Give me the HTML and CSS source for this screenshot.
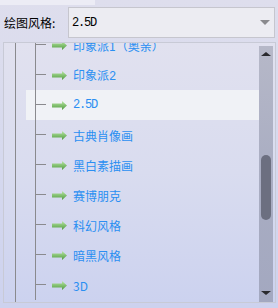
FILE: index.html
```html
<!DOCTYPE html>
<html lang="zh">
<head>
    <meta charset="UTF-8">
    <meta name="viewport" content="width=device-width, initial-scale=1.0">
    <title>绘图风格</title>
    <link rel="stylesheet" href="styles.css">
</head>
<body>
    <div class="topbar">
        <span class="label">绘图风格:</span>
        <div class="combo">
            <span class="combo-text">2.5D</span>
            <span class="combo-arrow"></span>
        </div>
    </div>

    <div class="list">
        <div class="tree">
            <div class="row"><span class="branch"></span><svg class="arrow" viewBox="0 0 15 9"><defs><linearGradient id="g1" x1="0" y1="0" x2="0" y2="1"><stop offset="0" stop-color="#b8e6a4"/><stop offset="1" stop-color="#4d9a3c"/></linearGradient></defs><path d="M0 2.5H10V0L15 4.5L10 9V6.5H0Z" fill="url(#g1)"/></svg><span class="name">印象派1（奥亲）</span></div>
            <div class="row"><span class="branch"></span><svg class="arrow" viewBox="0 0 15 9"><path d="M0 2.5H10V0L15 4.5L10 9V6.5H0Z" fill="url(#g1)"/></svg><span class="name">印象派<span class="mono">2</span></span></div>
            <div class="row selected"><span class="branch"></span><svg class="arrow" viewBox="0 0 15 9"><path d="M0 2.5H10V0L15 4.5L10 9V6.5H0Z" fill="url(#g1)"/></svg><span class="name mono">2.5D</span></div>
            <div class="row"><span class="branch"></span><svg class="arrow" viewBox="0 0 15 9"><path d="M0 2.5H10V0L15 4.5L10 9V6.5H0Z" fill="url(#g1)"/></svg><span class="name">古典肖像画</span></div>
            <div class="row"><span class="branch"></span><svg class="arrow" viewBox="0 0 15 9"><path d="M0 2.5H10V0L15 4.5L10 9V6.5H0Z" fill="url(#g1)"/></svg><span class="name">黑白素描画</span></div>
            <div class="row"><span class="branch"></span><svg class="arrow" viewBox="0 0 15 9"><path d="M0 2.5H10V0L15 4.5L10 9V6.5H0Z" fill="url(#g1)"/></svg><span class="name">赛博朋克</span></div>
            <div class="row"><span class="branch"></span><svg class="arrow" viewBox="0 0 15 9"><path d="M0 2.5H10V0L15 4.5L10 9V6.5H0Z" fill="url(#g1)"/></svg><span class="name">科幻风格</span></div>
            <div class="row"><span class="branch"></span><svg class="arrow" viewBox="0 0 15 9"><path d="M0 2.5H10V0L15 4.5L10 9V6.5H0Z" fill="url(#g1)"/></svg><span class="name">暗黑风格</span></div>
            <div class="row"><span class="branch"></span><svg class="arrow" viewBox="0 0 15 9"><path d="M0 2.5H10V0L15 4.5L10 9V6.5H0Z" fill="url(#g1)"/></svg><span class="name">3D</span></div>
        </div>
        <div class="scrollbar">
            <span class="sb-up"></span>
            <span class="sb-thumb"></span>
            <span class="sb-down"></span>
        </div>
    </div>
</body>
</html>
```

FILE: styles.css
```css
body {
    margin: 0;
    width: 278px;
    height: 308px;
    overflow: hidden;
    font-family: "Noto Sans CJK SC", "Noto Sans", sans-serif;
    font-size: 12px;
    background: linear-gradient(180deg, #dedeed 0%, #d6d9ee 50%, #cdd2ee 100%);
}
.topbar {
    display: flex;
    align-items: center;
    padding: 7px 3px 0 4px;
    height: 31px;
    background: linear-gradient(180deg, #ececf5 0, #ececf5 5px, transparent 5px) no-repeat;
    background-size: 95px 100%;
}
.label {
    width: 64px;
    color: #000;
    font-size: 12px;
}
.combo {
    flex: 1;
    height: 29px;
    border: 1px solid #c6c6ce;
    background-color: #ececf2;
    display: flex;
    align-items: center;
    padding-left: 3px;
}
.combo-text {
    flex: 1;
    font-family: "Liberation Mono", monospace;
    font-size: 12px;
    letter-spacing: -1.2px;
    color: #000;
}
.combo-arrow {
    width: 0;
    height: 0;
    border-left: 5px solid transparent;
    border-right: 5px solid transparent;
    border-top: 5px solid #8a8a8e;
    margin-right: 4px;
}
.list {
    margin: 4px 2px 0 3px;
    height: 259px;
    border: 1px solid #c8cad6;
    display: flex;
    overflow: hidden;
    background: linear-gradient(180deg, #e1e1ef 0%, #d9dcef 50%, #ccd2ef 100%);
}
.tree {
    flex: 1;
    margin-top: -13px;
    background-image: linear-gradient(90deg, transparent 11px, #8a8a8e 11px, #8a8a8e 12px, transparent 12px);
}
.row {
    height: 30px;
    margin-left: 22px;
    display: flex;
    align-items: center;
}
.row.selected {
    background-color: #f0f2f6;
}
.branch {
    align-self: stretch;
    width: 10px;
    margin-left: 9px;
    border-left: 1px solid #8a8a8e;
    background: linear-gradient(180deg, transparent 14px, #8a8a8e 14px, #8a8a8e 15px, transparent 15px);
}
.arrow {
    width: 15px;
    height: 9px;
    margin-left: 6px;
}
.name {
    margin-left: 6px;
    color: #2a8ff2;
    font-size: 12px;
}
.mono {
    font-family: "Liberation Mono", monospace;
    letter-spacing: -1.2px;
}
.scrollbar {
    width: 14px;
    margin: 3px 2px 0 0;
    background: linear-gradient(180deg, #b6b8c8 0%, #a9adc2 50%, #a3a8c0 100%);
    display: flex;
    flex-direction: column;
    align-items: center;
}
.sb-up {
    margin-top: 6px;
    border-left: 5px solid transparent;
    border-right: 5px solid transparent;
    border-bottom: 4px solid #2a2a2e;
}
.sb-thumb {
    width: 10px;
    height: 65px;
    margin-top: 99px;
    border-radius: 5px;
    background-color: #6c6f80;
}
.sb-down {
    margin-top: auto;
    margin-bottom: 7px;
    border-left: 5px solid transparent;
    border-right: 5px solid transparent;
    border-top: 4px solid #2a2a2e;
}
```
